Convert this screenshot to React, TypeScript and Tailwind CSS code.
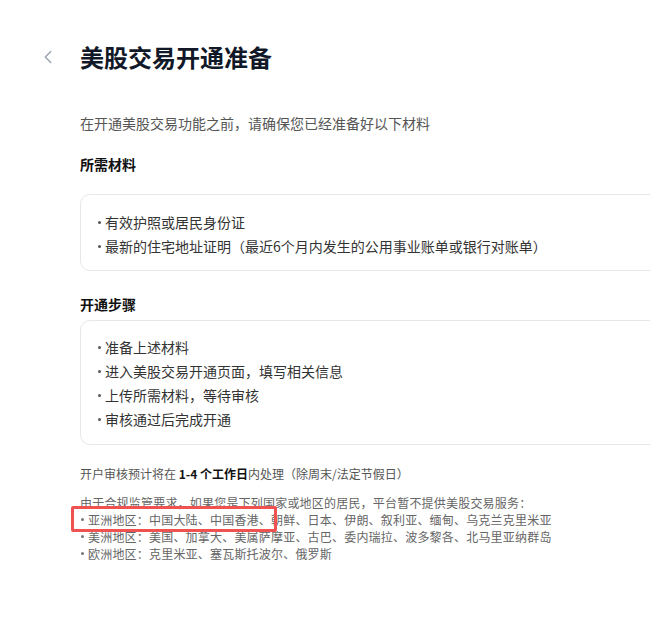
import React from "react";
import { ChevronLeft } from "lucide-react";

const MATERIALS = [
  "有效护照或居民身份证",
  "最新的住宅地址证明（最近6个月内发生的公用事业账单或银行对账单）",
];

const STEPS = [
  "准备上述材料",
  "进入美股交易开通页面，填写相关信息",
  "上传所需材料，等待审核",
  "审核通过后完成开通",
];

const REGIONS = [
  "亚洲地区：中国大陆、中国香港、朝鲜、日本、伊朗、叙利亚、缅甸、乌克兰克里米亚",
  "美洲地区：美国、加拿大、美属萨摩亚、古巴、委内瑞拉、波多黎各、北马里亚纳群岛",
  "欧洲地区：克里米亚、塞瓦斯托波尔、俄罗斯",
];

const BulletList = ({ items }: { items: string[] }) => (
  <ul className="text-[14px] leading-6 text-[#333]">
    {items.map((item, i) => (
      <li key={i} className="flex items-center">
        <span className="ml-[1px] mr-[4px] h-[3px] w-[3px] shrink-0 rounded-full bg-[#555]" />
        <span>{item}</span>
      </li>
    ))}
  </ul>
);

export default function App() {
  return (
    <div
      className="relative h-[619px] w-full overflow-hidden bg-white"
      style={{ fontFamily: '"Noto Sans CJK SC", "Noto Sans", sans-serif' }}
    >
      <header className="flex items-center pt-[40px] pl-[37px]">
        <ChevronLeft size={22} strokeWidth={1.5} className="text-gray-400" />
        <h1 className="ml-[21px] text-[24px] leading-[34px] font-bold text-[#111827]">
          美股交易开通准备
        </h1>
      </header>

      <main className="w-[620px] pl-[80px]">
        <p className="mt-[39px] text-[14px] leading-5 text-[#555]">
          在开通美股交易功能之前，请确保您已经准备好以下材料
        </p>

        <h2 className="mt-[21px] text-[14px] leading-5 font-bold text-[#111]">所需材料</h2>
        <div className="mt-[20px] w-[620px] rounded-[10px] border border-[#e5e7eb] pt-[15px] pb-[12px] pl-[16px]">
          <BulletList items={MATERIALS} />
        </div>

        <h2 className="mt-[23px] text-[14px] leading-5 font-bold text-[#111]">开通步骤</h2>
        <div className="mt-[6px] w-[620px] rounded-[10px] border border-[#e5e7eb] pt-[14px] pb-[13px] pl-[16px]">
          <BulletList items={STEPS} />
        </div>

        <p className="mt-[20px] text-[12px] leading-[17px] text-[#555]">
          开户审核预计将在 <span className="font-bold text-[#111]">1-4 个工作日</span>内处理（除周末/法定节假日）
        </p>

        <div className="mt-[12px] text-[12px] leading-[17px] tracking-[0.2px] text-[#666]">
          <p>由于合规监管要求，如果您是下列国家或地区的居民，平台暂不提供美股交易服务：</p>
          {REGIONS.map((r, i) => (
            <p key={i} className="flex items-center">
              <span className="ml-[1px] mr-[4px] h-[3px] w-[3px] shrink-0 rounded-full bg-[#777]" />
              <span>{r}</span>
            </p>
          ))}
        </div>
      </main>

      <div className="absolute left-[71px] top-[506px] h-[26px] w-[206px] rounded-[2px] border-[3px] border-[#f05252]" />
    </div>
  );
}
